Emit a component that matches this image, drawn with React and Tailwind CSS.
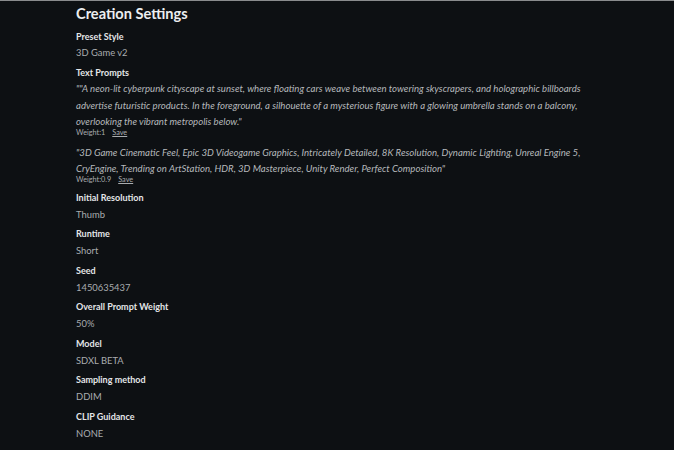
import React from "react";

const fields = [
  { label: "Initial Resolution", value: "Thumb" },
  { label: "Runtime", value: "Short" },
  { label: "Seed", value: "1450635437" },
  { label: "Overall Prompt Weight", value: "50%" },
  { label: "Model", value: "SDXL BETA" },
  { label: "Sampling method", value: "DDIM" },
  { label: "CLIP Guidance", value: "NONE" },
];

const Field = ({ label, value }) => (
  <div className="flex flex-col">
    <div className="text-[9px] font-bold leading-[12px] text-[#e4e6e8]">{label}</div>
    <div className="mt-[4px] text-[9.4px] leading-[14px] text-[#a9acaf]">{value}</div>
  </div>
);

const Prompt = ({ text, weight }) => (
  <div className="flex flex-col">
    <p className="text-[9.6px] italic leading-[16.5px] text-[#b6b9bc]">{text}</p>
    <div className="-mt-[3px] flex items-center gap-[7px] text-[7.3px] leading-[10px] text-[#a9acaf]">
      <span>Weight:{weight}</span>
      <span className="underline">Save</span>
    </div>
  </div>
);

const App = () => {
  return (
    <div
      className="w-[674px] h-[450px] overflow-hidden bg-[#0d1013] border-t border-[#8a8c8e]"
      style={{ fontFamily: "Lato, 'Open Sans', sans-serif" }}
    >
      <div className="pl-[76px] flex flex-col">
        <h1 className="pt-[3px] text-[14.6px] font-bold leading-[20px] text-[#eceef0]">Creation Settings</h1>

        <div className="mt-[7px] flex flex-col">
          <div className="text-[9px] font-bold leading-[12px] text-[#e4e6e8]">Preset Style</div>
          <div className="mt-[3px] text-[9.4px] leading-[14px] text-[#a9acaf]">3D Game v2</div>
        </div>

        <div className="mt-[7px] flex flex-col">
          <div className="text-[9px] font-bold leading-[12px] text-[#e4e6e8]">Text Prompts</div>
          <div className="mt-[2px] w-[540px] flex flex-col gap-[7px]">
            <Prompt
              weight="1"
              text={"\"\"A neon-lit cyberpunk cityscape at sunset, where floating cars weave between towering skyscrapers, and holographic billboards advertise futuristic products. In the foreground, a silhouette of a mysterious figure with a glowing umbrella stands on a balcony, overlooking the vibrant metropolis below.\""}
            />
            <Prompt
              weight="0.9"
              text={"\"3D Game Cinematic Feel, Epic 3D Videogame Graphics, Intricately Detailed, 8K Resolution, Dynamic Lighting, Unreal Engine 5, CryEngine, Trending on ArtStation, HDR, 3D Masterpiece, Unity Render, Perfect Composition\""}
            />
          </div>
        </div>

        <div className="mt-[7px] flex flex-col gap-[6.5px]">
          {fields.map((f) => (
            <Field key={f.label} label={f.label} value={f.value} />
          ))}
        </div>
      </div>
    </div>
  );
};

export default App;
